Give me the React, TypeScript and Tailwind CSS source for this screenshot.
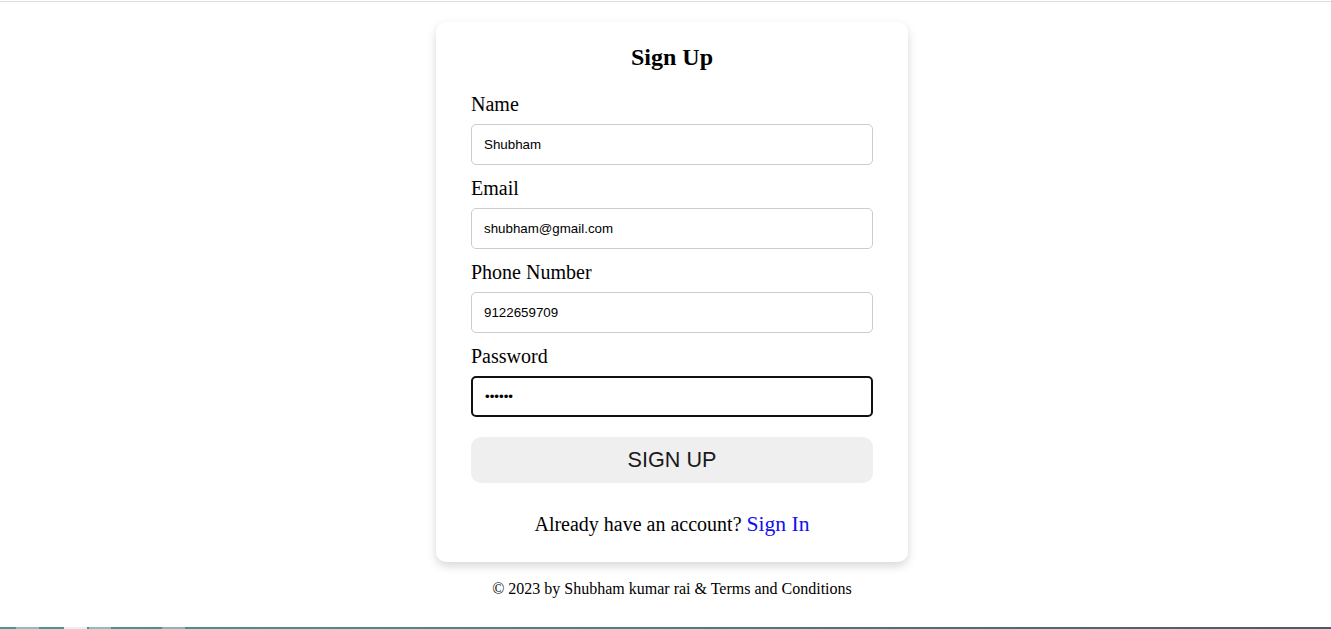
import React from "react";

const serif = { fontFamily: '"Liberation Serif", "Times New Roman", serif' };

function Field({ label, value, type = "text", focused = false, last = false }: { label: string; value: string; type?: string; focused?: boolean; last?: boolean }) {
  return (
    <div className={last ? "" : "pb-[11px]"}>
      <label className="block text-[20px] leading-[23px] pt-[1px] pb-[8px] text-black" style={serif}>
        {label}
      </label>
      <input
        type={type}
        readOnly
        defaultValue={value}
        className={
          "block w-full h-[41px] rounded-[5px] px-[12px] text-[13.33px] text-black bg-white outline-none font-['Liberation_Sans',Arial,sans-serif] " +
          (focused ? "border-2 border-[#111111] px-[11px]" : "border border-[#cccccc]")
        }
      />
    </div>
  );
}

export default function App() {
  return (
    <div className="h-[629px] w-full bg-white flex flex-col overflow-hidden">
      <div className="mt-[1px] h-px w-full bg-[#dcdcdc]" />
      <div className="flex flex-col items-center pl-[13px] pt-[20px]">
        <div className="w-[472px] bg-white rounded-[10px] shadow-[0_4px_10px_rgba(0,0,0,0.16)] px-[35px] pt-[21px] pb-[26px]">
          <h2 className="text-[24px] leading-[28px] font-bold text-center text-black mb-[21px]" style={serif}>
            Sign Up
          </h2>
          <Field label="Name" value="Shubham" />
          <Field label="Email" value="shubham@gmail.com" />
          <Field label="Phone Number" value="9122659709" />
          <Field label="Password" value="123456" type="password" focused last />
          <button className="mt-[20px] w-full h-[46px] rounded-[10px] bg-[#efefef] text-[21.6px] text-[#1a1a1a] font-['Liberation_Sans',Arial,sans-serif] flex items-center justify-center">
            SIGN UP
          </button>
          <p className="mt-[30px] text-center text-[20px] leading-[23px] text-black" style={serif}>
            Already have an account? <a className="text-[21.6px] text-[#1010f0]" style={serif}>Sign In</a>
          </p>
        </div>
        <p className="mt-[18px] text-[16px] leading-[18px] text-black" style={serif}>
          © 2023 by Shubham kumar rai &amp; Terms and Conditions
        </p>
      </div>
      <div className="flex-1" />
      <div className="h-[2px] w-full flex bg-gradient-to-r from-[#4d9790] via-[#4a7f86] to-[#4a5a6b]">
        <div className="w-[16px]" />
        <div className="w-[23px] bg-[#8fbfbb]" />
        <div className="w-[25px]" />
        <div className="w-[23px] bg-[#e6f0ef]" />
        <div className="w-[2px]" />
        <div className="w-[22px] bg-[#8fbfbb]" />
        <div className="w-[51px]" />
        <div className="w-[23px] bg-[#8fb4b4]" />
      </div>
    </div>
  );
}
